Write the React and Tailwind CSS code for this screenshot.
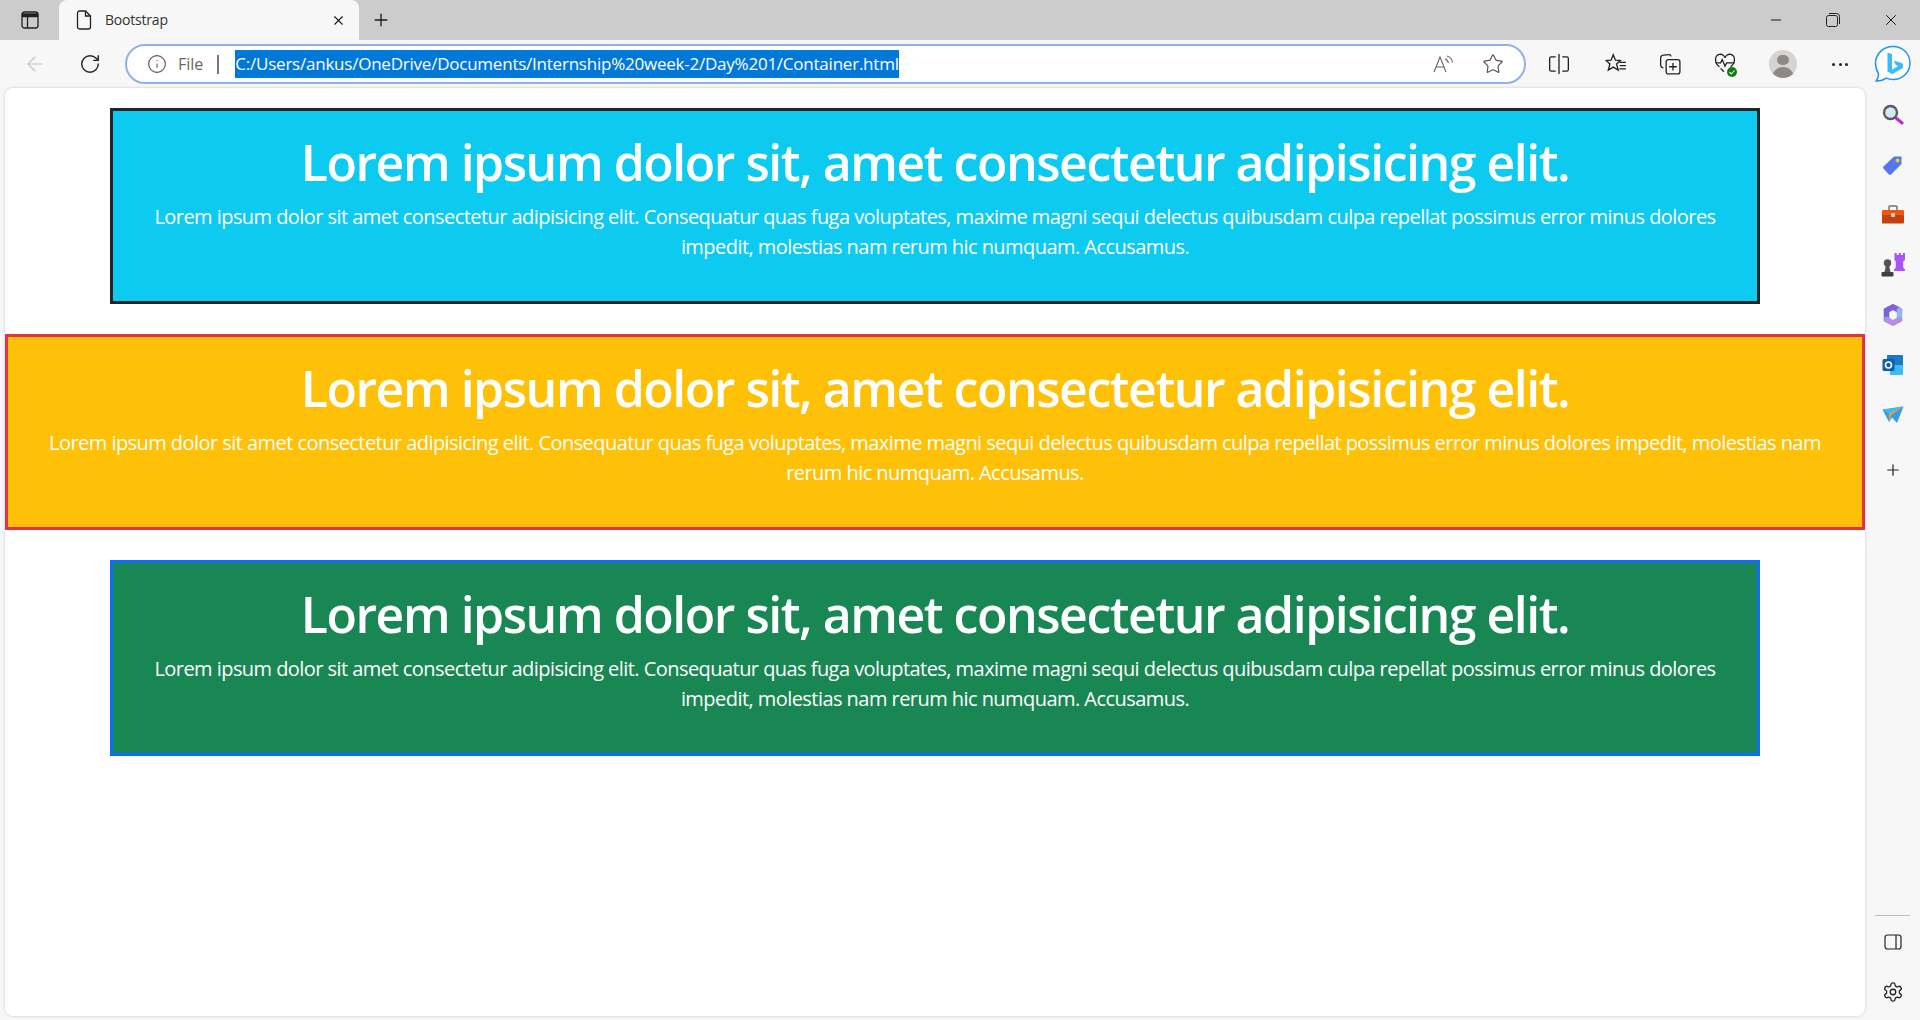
import { Plus, X, Minus, RotateCw, ArrowLeft, Info, Star } from 'lucide-react';

const Line = ({ className = '', children, size = 20, view = 20 }) => (
  <svg width={size} height={size} viewBox={`0 0 ${view} ${view}`} fill="none" stroke="currentColor" strokeWidth="1.2" className={className}>
    {children}
  </svg>
);

const BingIcon = () => (
  <svg width="38" height="38" viewBox="0 0 38 38" fill="none">
    <defs>
      <linearGradient id="bingRing" x1="4" y1="36" x2="34" y2="2">
        <stop offset="0" stopColor="#1558d6" />
        <stop offset="1" stopColor="#36c5f0" />
      </linearGradient>
      <linearGradient id="bingB" x1="12" y1="8" x2="28" y2="30">
        <stop offset="0" stopColor="#38bdf8" />
        <stop offset="1" stopColor="#1d4ed8" />
      </linearGradient>
    </defs>
    <path d="M19 1.500c9.600 0 17 7.400 17 16.500s-7.400 16.500-17 16.500c-2.400 0-4.800-.500-6.800-1.400-2.300 1.700-5.200 2.700-10 2.900 1.700-2 2.400-4.400 2.400-7.200C2.800 26 1.500 22 1.500 18 1.500 8.900 9.400 1.500 19 1.500Z" fill="#fff" stroke="url(#bingRing)" strokeWidth="1.500" />
    <path d="M13.500 7.500l4.500 1.600v15.600l6.200-3.600-2.500-1.200-1.800-4.400 9 3.100v4.500l-10.700 6.200-4.700-2.700Z" fill="url(#bingB)" />
  </svg>
);

const SideSearch = () => (
  <svg width="22" height="22" viewBox="0 0 22 22" fill="none">
    <path d="M14 14l6 5" stroke="#c026d3" strokeWidth="3" strokeLinecap="round" />
    <circle cx="8.500" cy="8.500" r="6.500" fill="#cfe9f5" stroke="#5b5b60" strokeWidth="2.400" />
  </svg>
);

const SideTag = () => (
  <svg width="22" height="22" viewBox="0 0 22 22">
    <defs>
      <linearGradient id="tagFill" x1="2" y1="20" x2="20" y2="2">
        <stop offset="0" stopColor="#2563eb" />
        <stop offset="1" stopColor="#818cf8" />
      </linearGradient>
    </defs>
    <path d="M1.500 12.500 12 2.500h7.500v7.500L9 20.500a1.500 1.500 0 0 1-2 0l-5.500-6a1.500 1.500 0 0 1 0-2Z" fill="url(#tagFill)" />
    <circle cx="15.500" cy="6.500" r="2" fill="#facc15" />
  </svg>
);

const SideToolbox = () => (
  <svg width="24" height="20" viewBox="0 0 24 20">
    <path d="M8 5V2a1 1 0 0 1 1-1h6a1 1 0 0 1 1 1v3" fill="none" stroke="#78716c" strokeWidth="1.500" />
    <rect x="1" y="5" width="22" height="6" rx="1" fill="#ea580c" />
    <rect x="1" y="10" width="22" height="8.500" rx="1" fill="#c2410c" />
    <rect x="10" y="8" width="4" height="4" rx="1" fill="#d6d3d1" />
  </svg>
);

const SideChess = () => (
  <svg width="24" height="24" viewBox="0 0 24 24">
    <path d="M13.500 0h2.200v2h2V0h2.200v2h2V0H24v7l-1.800 1.500v6l1.800 2V18H13v-1.500l1.800-2v-6L13.500 7Z" fill="#a855f7" />
    <circle cx="6.500" cy="10" r="3.700" fill="#52525b" />
    <path d="M4.800 13h3.400l1.300 6H3.500Z" fill="#52525b" />
    <rect x="0.500" y="19" width="12" height="4.500" rx="1" fill="#3f3f46" />
  </svg>
);

const SideM365 = () => (
  <svg width="22" height="24" viewBox="0 0 22 24" fill="none" strokeWidth="5.500" strokeLinejoin="round" strokeLinecap="round">
    <path d="M4.500 16.500v-9" stroke="#5a6fdc" />
    <path d="M4.500 7.500 11 3.800l6.500 3.700" stroke="#7f5fe0" />
    <path d="M17.500 7.500v9" stroke="#8fb8ee" />
    <path d="M17.500 16.500 11 20.200l-6.500-3.700" stroke="#b48fe6" />
  </svg>
);

const SideOutlook = () => (
  <svg width="22" height="22" viewBox="0 0 22 22">
    <rect x="5" y="1" width="16" height="11" rx="1" fill="#1e78c8" />
    <path d="M8 11h13v9a1 1 0 0 1-1 1H8Z" fill="#38bdf8" />
    <rect x="0.500" y="5" width="12" height="12" rx="1.500" fill="#0f5fa8" />
    <circle cx="6.500" cy="11" r="3" fill="none" stroke="#fff" strokeWidth="1.600" />
  </svg>
);

const SideSend = () => (
  <svg width="22" height="18" viewBox="0 0 22 18">
    <path d="M0.500 3.500 21.500 0.500 15 17 10 11.500 7 16Z" fill="#3b9ae8" />
    <path d="M0.500 3.500 21.500 0.500 7 7.500Z" fill="#38bdf8" />
    <path d="M21.500 0.500 7 7.500 7 16 9 9Z" fill="#f5a524" />
  </svg>
);

const SideSlot = ({ children }) => <div className="h-[50px] flex items-center justify-center">{children}</div>;

const Banner = ({ boxClass }) => (
  <div className={`border-[3px] h-[196px] px-[12px] text-center text-white ${boxClass}`}>
    <h1 className="mt-[21px] mb-[10px] text-[50px] leading-[60px] font-semibold tracking-[-1.48px]">
      Lorem ipsum dolor sit, amet consectetur adipisicing elit.
    </h1>
    <p className="text-[20px] leading-[30px] tracking-[-0.55px]">
      Lorem ipsum dolor sit amet consectetur adipisicing elit. Consequatur quas fuga voluptates, maxime magni sequi delectus quibusdam culpa repellat possimus error minus dolores impedit, molestias nam rerum hic numquam. Accusamus.
    </p>
  </div>
);

export default function App() {
  return (
    <div className="h-[1020px] w-[1920px] overflow-hidden bg-[#f7f7f7] font-['Open_Sans',sans-serif] flex flex-col">
      {/* tab strip */}
      <div className="h-[40px] shrink-0 bg-[#cccccc] flex items-end text-[#1a1a1a]">
        <div className="w-[59px] h-[40px] flex items-center pl-[21px]">
          <svg width="18" height="18" viewBox="0 0 18 18" fill="none" stroke="#222" strokeWidth="1.300">
            <rect x="1" y="1" width="16" height="16" rx="2.500" />
            <path d="M1.500 3h15v2.500h-15Z" fill="#222" />
            <path d="M6.500 5v12" />
          </svg>
        </div>
        <div className="w-[300px] h-[40px] bg-[#f7f7f7] rounded-t-[8px] flex items-center pl-[16px] pr-[13px]">
          <svg width="18" height="20" viewBox="0 0 18 20" fill="none" stroke="#222" strokeWidth="1.300">
            <path d="M2.500 3a2 2 0 0 1 2-2h6l5 5v11a2 2 0 0 1-2 2h-9a2 2 0 0 1-2-2Z" />
            <path d="M10.500 1v5h5" />
          </svg>
          <span className="ml-[12px] mb-[2px] text-[14px] tracking-[-0.2px] text-[#333]">Bootstrap</span>
          <X size={15} strokeWidth={1.800} className="ml-auto" />
        </div>
        <div className="h-[40px] flex items-center ml-[12px]">
          <Plus size={20} strokeWidth={1.300} absoluteStrokeWidth />
        </div>
        <div className="ml-auto h-[40px] flex items-center">
          <Minus size={16} strokeWidth={1} absoluteStrokeWidth />
          <svg width="14" height="14" viewBox="0 0 14 14" fill="none" stroke="#222" className="ml-[42px]">
            <rect x="0.500" y="2.500" width="11" height="11" rx="2" />
            <path d="M3 .5h7.500a3 3 0 0 1 3 3V11" />
          </svg>
          <X size={18} strokeWidth={1} absoluteStrokeWidth className="ml-[42px] mr-[20px]" />
        </div>
      </div>

      {/* toolbar */}
      <div className="h-[48px] shrink-0 flex items-center text-[#222]">
        <ArrowLeft size={24} strokeWidth={1.100} absoluteStrokeWidth className="ml-[23px] text-[#c4c4c4]" />
        <RotateCw size={22} strokeWidth={1.400} absoluteStrokeWidth className="ml-[32px]" />
        <div className="ml-[24px] w-[1401px] h-[40px] rounded-full border-2 border-[#8fb2e8] bg-white flex items-center pl-[20px] pr-[20px]">
          <Info size={20} strokeWidth={1.100} absoluteStrokeWidth className="text-[#555]" />
          <span className="ml-[11px] text-[16px] text-[#666]">File</span>
          <span className="ml-[14px] w-[2px] h-[19px] bg-[#777]" />
          <span className="ml-[16px] h-[28px] leading-[28px] bg-[#0078d7] text-white text-[17px] tracking-[-0.23px] whitespace-nowrap">
            C:/Users/ankus/OneDrive/Documents/Internship%20week-2/Day%201/Container.html
          </span>
          <svg width="22" height="20" viewBox="0 0 22 20" fill="none" stroke="#666" strokeWidth="1.100" className="ml-auto">
            <path d="M1 18 7 3l6 15M3.200 13h7.600" />
            <path d="M12 5c2 .5 3 2 3.300 4M14 2c3 .8 5 3.200 5.500 6.500" />
          </svg>
          <Star size={22} strokeWidth={1.200} absoluteStrokeWidth className="ml-[27px] text-[#555]" />
        </div>
        <Line className="ml-[22px]" size={22}>
          <path d="M7 3.500H3a1.500 1.500 0 0 0-1.500 1.500v10A1.500 1.500 0 0 0 3 16.500h4M13 3.500h4A1.500 1.500 0 0 1 18.500 5v10a1.500 1.500 0 0 1-1.500 1.500h-4M10 1v18" />
        </Line>
        <Line className="ml-[35px]" size={22}>
          <path d="M7.500 1.500 9.500 6.500 14 6.800 10.500 10 12 15.500 7.500 12.800 3 15.500 4.500 10 1 6.800 5.500 6.500Z" />
          <path d="M13 8.500h6M13.500 11.500h5.500M13 14.500h6" />
        </Line>
        <Line className="ml-[32px]" size={22}>
          <path d="M4 13.500a2.500 2.500 0 0 1-2.500-2.500V4.500A2.500 2.500 0 0 1 4 2l5-.500a2 2 0 0 1 2 1.500" />
          <rect x="6.500" y="6" width="12.500" height="13" rx="2" />
          <path d="M12.700 9v7M9.200 12.500h7" />
        </Line>
        <div className="relative ml-[33px]">
          <Line size={22}>
            <path d="M5 12.500C3 11 1.500 9 1.500 6.500A4 4 0 0 1 10 4.500a4 4 0 0 1 8.500 2c0 2.500-1.500 4.500-3.500 6" />
            <path d="M1.500 9H6l1.500-3 2.500 6 1.500-3h7M6 14l3 3" />
          </Line>
          <svg width="10" height="10" viewBox="0 0 10 10" className="absolute right-[-1px] bottom-[-2px]">
            <circle cx="5" cy="5" r="5" fill="#107c10" />
            <path d="M2.500 5.200 4.300 7l3.200-3.500" fill="none" stroke="#fff" strokeWidth="1.100" />
          </svg>
        </div>
        <div className="ml-[33px] w-[28px] h-[28px] rounded-full bg-[#d6d4d0] flex flex-col items-center overflow-hidden">
          <span className="mt-[5px] w-[12px] h-[12px] rounded-full bg-[#8c8a86]" />
          <span className="mt-[2px] w-[22px] h-[14px] rounded-t-full bg-[#8c8a86]" />
        </div>
        <div className="ml-[35px] w-[16px] flex justify-between">
          <span className="w-[3px] h-[3px] rounded-full bg-[#222]" />
          <span className="w-[3px] h-[3px] rounded-full bg-[#222]" />
          <span className="w-[3px] h-[3px] rounded-full bg-[#222]" />
        </div>
        <div className="ml-[26px]">
          <BingIcon />
        </div>
      </div>

      {/* page + edge sidebar */}
      <div className="flex-1 flex pl-[5px] pb-[4px]">
        <div className="w-[1860px] h-[928px] bg-white rounded-[8px] shadow-[0_0_3px_rgba(0,0,0,0.2)] pt-[20px] flex flex-col gap-[30px]">
          <Banner boxClass="w-[1650px] mx-auto bg-[#0dcaf0] border-[#212529]" />
          <Banner boxClass="w-full bg-[#ffc107] border-[#dc3545]" />
          <Banner boxClass="w-[1650px] mx-auto bg-[#198754] border-[#0d6efd]" />
        </div>
        <div className="flex-1 flex flex-col items-center pt-[2px] text-[#222]">
          <div className="flex flex-col items-center">
            <SideSlot><SideSearch /></SideSlot>
            <SideSlot><SideTag /></SideSlot>
            <SideSlot><SideToolbox /></SideSlot>
            <SideSlot><SideChess /></SideSlot>
            <SideSlot><SideM365 /></SideSlot>
            <SideSlot><SideOutlook /></SideSlot>
            <SideSlot><SideSend /></SideSlot>
          </div>
          <Plus size={18} strokeWidth={1.200} absoluteStrokeWidth className="mt-[21px]" />
          <div className="mt-auto w-[35px] h-[1px] bg-[#bbb]" />
          <svg width="18" height="16" viewBox="0 0 18 16" fill="none" stroke="#222" strokeWidth="1.200" className="mt-[18px]">
            <rect x="1" y="1" width="16" height="14" rx="2.500" />
            <path d="M12 1v14" />
          </svg>
          <svg width="22" height="22" viewBox="0 0 24 24" fill="none" stroke="#222" strokeWidth="1.400" className="mt-[31px] mb-[13px]">
            <path d="M12.220 2h-.440a2 2 0 0 0-2 2v.180a2 2 0 0 1-1 1.730l-.430.250a2 2 0 0 1-2 0l-.150-.080a2 2 0 0 0-2.730.730l-.220.380a2 2 0 0 0 .730 2.730l.150.100a2 2 0 0 1 1 1.720v.510a2 2 0 0 1-1 1.740l-.150.090a2 2 0 0 0-.730 2.730l.220.380a2 2 0 0 0 2.730.730l.150-.080a2 2 0 0 1 2 0l.430.250a2 2 0 0 1 1 1.730V20a2 2 0 0 0 2 2h.440a2 2 0 0 0 2-2v-.180a2 2 0 0 1 1-1.730l.430-.250a2 2 0 0 1 2 0l.150.080a2 2 0 0 0 2.730-.730l.220-.390a2 2 0 0 0-.730-2.730l-.150-.080a2 2 0 0 1-1-1.740v-.500a2 2 0 0 1 1-1.740l.150-.090a2 2 0 0 0 .730-2.730l-.220-.380a2 2 0 0 0-2.730-.730l-.150.080a2 2 0 0 1-2 0l-.430-.250a2 2 0 0 1-1-1.730V4a2 2 0 0 0-2-2z" />
            <circle cx="12" cy="12" r="3" />
          </svg>
        </div>
      </div>
    </div>
  );
}
